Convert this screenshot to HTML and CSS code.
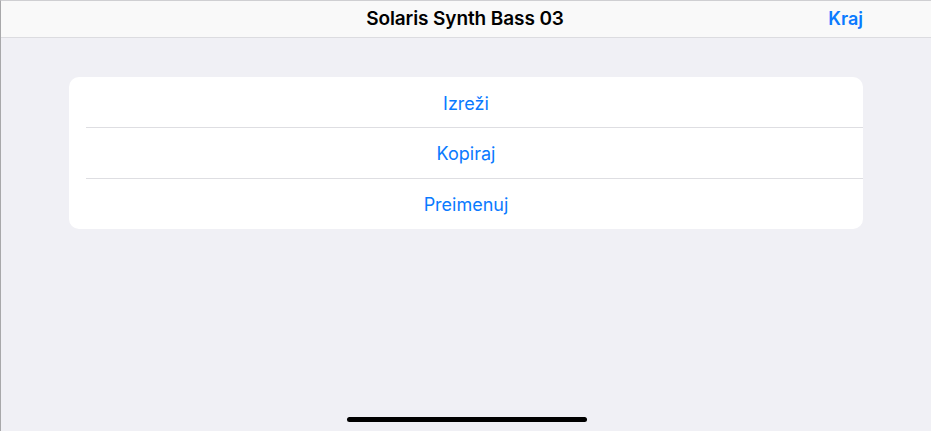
FILE: index.html
```html
<!DOCTYPE html>
<html lang="hr">
<head>
<meta charset="utf-8">
<link rel="stylesheet" href="styles.css">
</head>
<body>
<div class="screen">
  <header class="navbar">
    <div class="nav-side"></div>
    <div class="nav-title">Solaris Synth Bass 03</div>
    <div class="nav-side nav-right"><span class="nav-btn">Kraj</span></div>
  </header>
  <main class="content">
    <div class="menu">
      <div class="row">Izreži</div>
      <div class="row">Kopiraj</div>
      <div class="row">Preimenuj</div>
    </div>
  </main>
  <div class="home-bar"><span class="home-indicator"></span></div>
</div>
</body>
</html>
```
FILE: styles.css
```css
* { box-sizing: border-box; }
html, body { margin: 0; padding: 0; }
body {
  font-family: Inter, "Liberation Sans", sans-serif;
  background: #f0f0f5;
}
.screen {
  width: 931px;
  height: 431px;
  display: flex;
  flex-direction: column;
  border-left: 1px solid #a8a8aa;
  border-top: 1px solid #cfcfd2;
  background: #f0f0f5;
}
.navbar {
  height: 37px;
  flex: none;
  display: grid;
  grid-template-columns: 1fr auto 1fr;
  align-items: center;
  background: #f9f9f9;
  border-bottom: 1px solid #dcdce0;
  padding: 0 68px 1px 66px;
}
.nav-title {
  font-size: 19px;
  font-weight: 600;
  color: #000;
  letter-spacing: -0.1px;
}
.nav-right { display: flex; justify-content: flex-end; }
.nav-btn {
  color: #0a7aff;
  font-size: 18px;
  font-weight: 600;
}
.content {
  flex: 1;
  padding: 39px 68px 0 68px;
}
.menu {
  background: #fff;
  border-radius: 10px;
  overflow: hidden;
}
.row {
  height: 51px;
  display: flex;
  align-items: center;
  justify-content: center;
  color: #0a7aff;
  font-size: 18px;
  position: relative;
  padding-top: 2px;
}
.row + .row::before {
  content: "";
  position: absolute;
  top: 0;
  left: 17px;
  right: 0;
  height: 1px;
  background: #dedee2;
}
.row:first-child { height: 50px; }
.home-bar {
  flex: none;
  height: 14px;
  display: flex;
  justify-content: center;
}
.home-indicator {
  width: 240px;
  height: 5px;
  border-radius: 3px;
  background: #000;
  margin-left: 1px;
}
```
